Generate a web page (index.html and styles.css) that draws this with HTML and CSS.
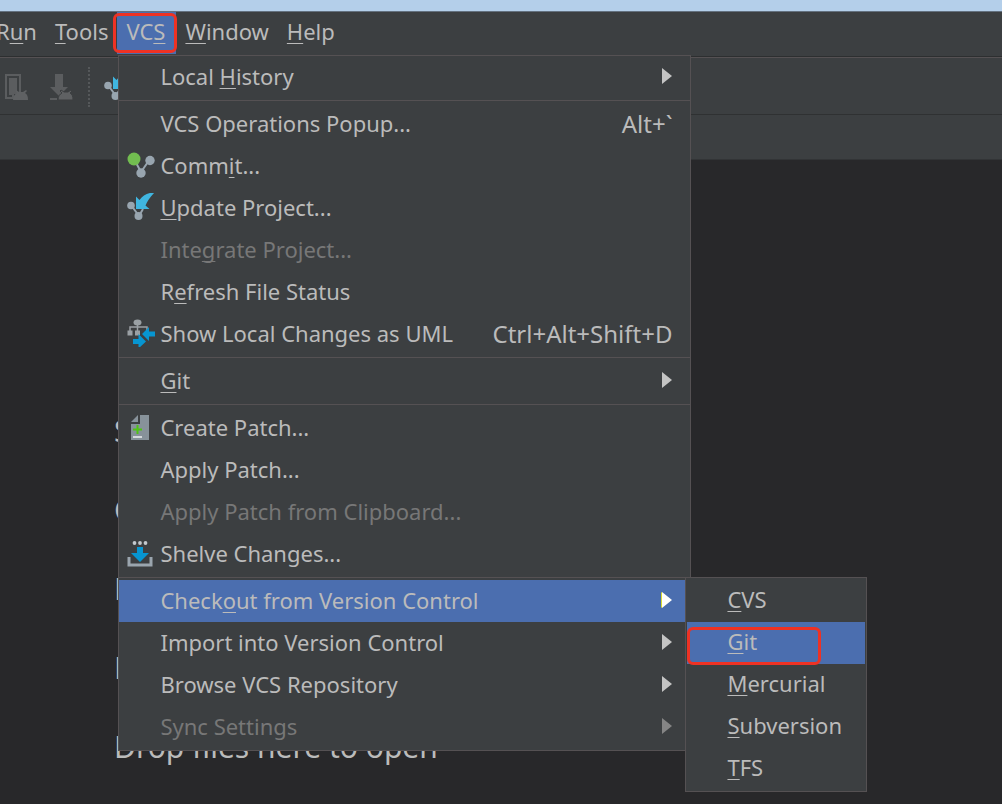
FILE: index.html
```html
<!DOCTYPE html>
<html lang="en">
<head>
<meta charset="utf-8">
<title>Welcome</title>
<link rel="stylesheet" href="styles.css">
</head>
<body>
<div class="titlebar"></div>

<nav class="menubar">
  <button class="top"><span>R<u>u</u>n</span></button>
  <button class="top"><span><u>T</u>ools</span></button>
  <div class="dropdown">
    <button class="top active marked"><span>VC<u>S</u></span></button>
    <ul class="menu">
      <li><button class="item"><span class="icon"></span><span>Local <u>H</u>istory</span><i class="arrow"></i></button></li>
      <li class="sep"></li>
      <li><button class="item"><span class="icon"></span><span>VCS Operations Popup...</span><kbd>Alt+`</kbd></button></li>
      <li><button class="item">
        <svg class="icon" viewBox="0 0 28 28"><path d="M7 8l7 13 9-13" fill="none" stroke="#98a5af" stroke-width="2"/><circle cx="7" cy="8" r="6.500" fill="#72bd50"/><circle cx="23" cy="9.500" r="4.700" fill="#98a5af"/><circle cx="14" cy="22" r="4.700" fill="#98a5af"/></svg>
        <span>Comm<u>i</u>t...</span></button></li>
      <li><button class="item">
        <svg class="icon" viewBox="0 0 28 28"><path d="M4 12l8 11 4-7" fill="none" stroke="#98a5af" stroke-width="2"/><circle cx="4" cy="12.500" r="3.800" fill="#98a5af"/><circle cx="11.500" cy="23" r="4" fill="#98a5af"/><path d="M9 3.500l3.500 3.500C16 2.500 20.500-.5 27.500-.5 23 4 20.500 8 18.500 12.500l4 3.500H9z" fill="#40b6e0"/></svg>
        <span><u>U</u>pdate Project...</span></button></li>
      <li><button class="item" disabled><span class="icon"></span><span>Inte<u>g</u>rate Project...</span></button></li>
      <li><button class="item"><span class="icon"></span><span>R<u>e</u>fresh File Status</span></button></li>
      <li><button class="item">
        <svg class="icon" viewBox="0 0 28 28"><path d="M3 13V8h17v3M10.500 4v9" fill="none" stroke="#9aa0a4" stroke-width="1.500"/><ellipse cx="10.500" cy="3.500" rx="4" ry="3" fill="#9aa0a4"/><path d="M.5 11.500h5v5h-5zM8 11.500h5v5H8z" fill="#9aa0a4"/><path d="M15 15l7-7v4.500h6v5h-6V22zM6 20h5.500v-5l7.500 7.500-7.500 7V25H6z" fill="#0795d0"/></svg>
        <span>Show Local Changes as UML</span><kbd>Ctrl+Alt+Shift+D</kbd></button></li>
      <li class="sep"></li>
      <li><button class="item"><span class="icon"></span><span><u>G</u>it</span><i class="arrow"></i></button></li>
      <li class="sep"></li>
      <li><button class="item">
        <svg class="icon" viewBox="0 0 28 28"><path d="M13 2h9v25H4V11h9z" fill="#87929a"/><path d="M11 2v7H4z" fill="#87929a"/><path d="M10.500 12v9M6 16.500h9" stroke="#4fc414" stroke-width="2"/><path d="M6 24h9" stroke="#d5dadd" stroke-width="2"/></svg>
        <span>Create Patch...</span></button></li>
      <li><button class="item"><span class="icon"></span><span>Apply Patch...</span></button></li>
      <li><button class="item" disabled><span class="icon"></span><span>Apply Patch from Clipboard...</span></button></li>
      <li><button class="item">
        <svg class="icon" viewBox="0 0 28 28"><path d="M2 18v8h22v-8" fill="none" stroke="#9aa5ae" stroke-width="3"/><path d="M10 8h6v6h6l-9 9-9-9h6z" fill="#0795d0"/><g fill="#c3c8cc"><circle cx="7.500" cy="4" r="1.900"/><circle cx="13" cy="4" r="1.900"/><circle cx="18.500" cy="4" r="1.900"/></g></svg>
        <span>Shelve Changes...</span></button></li>
      <li class="sep"></li>
      <li class="dropdown">
        <button class="item active"><span class="icon"></span><span>Check<u>o</u>ut from Version Control</span><i class="arrow"></i></button>
        <ul class="menu submenu">
          <li><button class="item"><span><u>C</u>VS</span></button></li>
          <li><button class="item active marked"><span><u>G</u>it</span></button></li>
          <li><button class="item"><span><u>M</u>ercurial</span></button></li>
          <li><button class="item"><span><u>S</u>ubversion</span></button></li>
          <li><button class="item"><span><u>T</u>FS</span></button></li>
        </ul>
      </li>
      <li><button class="item"><span class="icon"></span><span>Import into Version Control</span><i class="arrow"></i></button></li>
      <li><button class="item"><span class="icon"></span><span>Browse VCS Repository</span><i class="arrow"></i></button></li>
      <li><button class="item" disabled><span class="icon"></span><span>Sync Settings</span><i class="arrow"></i></button></li>
    </ul>
  </div>
  <button class="top"><span><u>W</u>indow</span></button>
  <button class="top"><span><u>H</u>elp</span></button>
</nav>

<div class="toolbar">
  <button class="tool" aria-label="AVD Manager">
    <svg viewBox="0 0 28 28"><path d="M2 2h14v18H9v5H2z" fill="none" stroke="#5b5d5f" stroke-width="2"/><path d="M5 5h8v13l-5 4H5z" fill="#5b5d5f"/><path d="M9 27c0-4 2-6 4-7l-2-2 1-1 3 2h4l3-2 1 1-2 2c2 1 3 3 3 7z" fill="#5f6163"/></svg>
  </button>
  <button class="tool" aria-label="SDK Manager">
    <svg viewBox="0 0 28 28"><path d="M6 1h8v13h5l-9 9-9-9h5zM1 25h7v2H1z" fill="#5b5d5f"/><path d="M9 27c0-4 2-6 4-7l-2-2 1-1 3 2h4l3-2 1 1-2 2c2 1 3 3 3 7z" fill="#5f6163" stroke="#3c3f41"/></svg>
  </button>
  <span class="divider"></span>
  <button class="tool" aria-label="Update Project">
    <svg viewBox="0 0 28 28"><path d="M4 12l8 11 4-7" fill="none" stroke="#98a5af" stroke-width="2"/><circle cx="4" cy="12.500" r="3.800" fill="#98a5af"/><circle cx="11.500" cy="23" r="4" fill="#98a5af"/><path d="M9 3.500l3.500 3.500C16 2.500 20.500-.5 27.500-.5 23 4 20.500 8 18.500 12.500l4 3.500H9z" fill="#40b6e0"/></svg>
  </button>
</div>
<div class="navbar"></div>

<main class="editor">
  <ul class="hints">
    <li>Search Everywhere</li>
    <li>Go to File</li>
    <li>Recent Files</li>
    <li>Navigation Bar</li>
    <li>Drop files here to open</li>
  </ul>
</main>
</body>
</html>
```
FILE: styles.css
```css
* {
	box-sizing:border-box;
}
body {
	margin:0;
	min-height:100vh;
	display:flex;
	flex-direction:column;
	overflow:hidden;
	background-color:#28282a;
	font-family:"Noto Sans", sans-serif;
	font-size:22px;
	color:#bbb;
}
ul {
	margin:0;
	padding:0;
	list-style:none;
}
button {
	margin:0;
	border:0;
	background:none;
	font:inherit;
	color:inherit;
	text-align:left;
	white-space:nowrap;
}
u {
	text-decoration-thickness:1px;
	text-underline-offset:3px;
	text-decoration-skip-ink:none;
}
.titlebar {
	height:12px;
	background-color:#b4cfea;
	border-bottom:1px solid #64717f;
}
.menubar {
	display:flex;
	height:45px;
	margin-left:-13px;
	background-color:#3c3f41;
	border-bottom:1px solid #2d2f30;
}
.top {
	height:42px;
	padding:0 9px;
	line-height:38px;
}
.top span {
	display:block;
	height:42px;
}
.top.active {
	padding-right:11px;
}
.dropdown {
	position:relative;
}
.active {
	background-color:#4b6eaf;
}
/* red frame round the steps to click */
.marked {
	position:relative;
}
.marked::after {
	content:"";
	position:absolute;
	top:1px;
	right:-1px;
	bottom:1px;
	left:-4px;
	border:3px solid #ee3224;
	border-radius:6px;
}
.menu {
	position:absolute;
	z-index:1;
	top:43px;
	left:1px;
	width:573px;
	padding-bottom:2px;
	background-color:#3c3f41;
	border:1px solid #555153;
}
.item {
	display:flex;
	align-items:center;
	gap:5px;
	width:100%;
	height:42px;
	padding:0 18px 2px 8px;
}
.item:disabled {
	color:#777;
}
.icon {
	flex:none;
	width:28px;
	height:28px;
}
.item kbd, .arrow {
	margin-left:auto;
	font-family:inherit;
	font-size:24px;
}
.arrow {
	border-left:10px solid #c4c4c4;
	border-top:8px solid transparent;
	border-bottom:8px solid transparent;
}
.item:disabled .arrow {
	border-left-color:#858585;
}
.item.active .arrow {
	border-left-color:#fff;
	filter:drop-shadow(-1px 0 #d8dc30);
}
.sep {
	height:5px;
	padding-top:2px;
}
.sep::before {
	content:"";
	display:block;
	border-top:1px solid #555153;
}
.submenu {
	top:-3px;
	left:566px;
	width:182px;
	padding:2px 1px 1px;
}
.submenu .item {
	padding-left:40px;
	padding-bottom:4px;
}
.submenu .marked::after {
	top:5px;
	right:44px;
	bottom:-1px;
	left:0;
}
.toolbar {
	display:flex;
	align-items:center;
	height:58px;
	padding:2px 0 0 4px;
	background-color:#3c3f41;
	border-top:1px solid #555153;
	border-bottom:1px solid #2f3132;
}
.tool {
	width:28px;
	height:28px;
	padding:0;
	margin-right:17px;
}
.tool svg {
	display:block;
}
.divider {
	height:40px;
	margin:0 14px 0 -6px;
	border-left:2px dotted #55585a;
}
.navbar {
	height:45px;
	background-color:#3c3f41;
	border-bottom:1px solid #323436;
}
.editor {
	flex:1;
	padding:231px 0 0 114px;
}
.hints {
	font-size:30px;
	line-height:79px;
}
```
